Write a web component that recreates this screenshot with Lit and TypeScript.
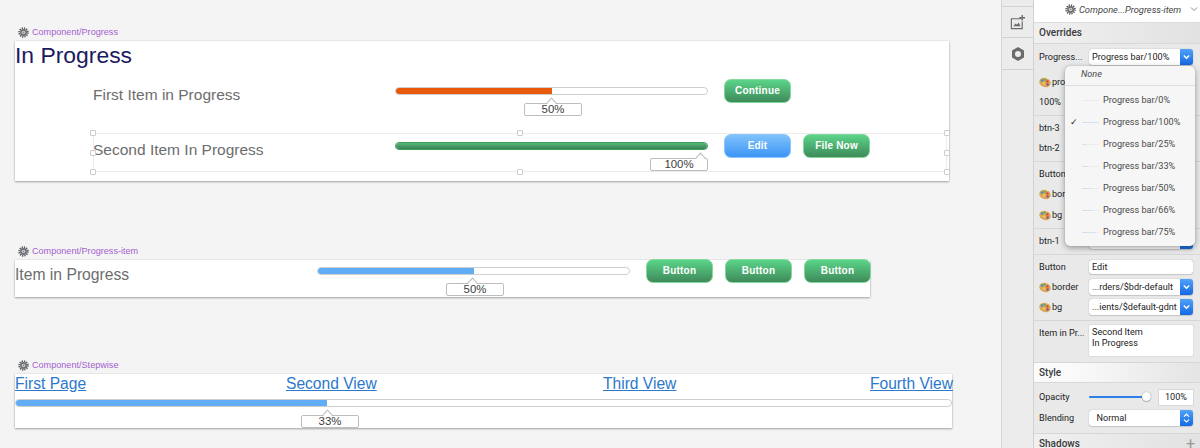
import { LitElement, html, css } from "lit";
import { customElement } from "lit/decorators.js";

const gear = html`<svg class="gear" viewBox="0 0 12 12" width="11" height="11">
  <circle cx="6" cy="6" r="4.6" fill="none" stroke="#55585c" stroke-width="2.2" stroke-dasharray="1.3 1.1"/>
  <circle cx="6" cy="6" r="3.7" fill="#6b6e73"/>
  <circle cx="6" cy="6" r="2" fill="#d8d9da"/>
  <circle cx="6" cy="6" r="1" fill="#85888c"/>
</svg>`;

const palette = html`<svg class="pal" viewBox="0 0 12 11" width="12" height="11">
  <ellipse cx="6" cy="5.5" rx="5.8" ry="4.6" fill="#dba654" transform="rotate(20 6 5.5)"/>
  <circle cx="3" cy="3.5" r="1.2" fill="#3f8fd8"/>
  <circle cx="5.6" cy="2.8" r="1.1" fill="#4fae55"/>
  <circle cx="8.4" cy="4.4" r="1.2" fill="#d8443c"/>
  <circle cx="8.6" cy="7.4" r="1.2" fill="#8a45b0"/>
  <circle cx="5" cy="6.6" r="1.2" fill="#e8d24c"/>
</svg>`;

const chevDown = html`<svg viewBox="0 0 13 16" width="13" height="16"><path d="M3.8 6.6 6.5 9.3 9.2 6.6" fill="none" stroke="#fff" stroke-width="1.4"/></svg>`;
const updown = html`<svg viewBox="0 0 13 16" width="13" height="16"><path d="M4 6.6 6.5 4.2 9 6.6M4 9.6 6.5 12 9 9.6" fill="none" stroke="#fff" stroke-width="1.2"/></svg>`;

@customElement("progress-bar")
class ProgressBar extends LitElement {
  static properties = {
    pct: { type: Number },
    tone: {},
    label: {},
    tipStart: { type: Number },
    caret: { type: Number },
  };
  pct = 0;
  tone = "blue";
  label = "";
  tipStart = 0;
  caret = 0;
  static styles = css`
    :host { display: block; position: relative; height: 8px; }
    .track { height: 8px; box-sizing: border-box; background: #fff; border: 1px solid #cfcfcf; border-radius: 4px; overflow: hidden; }
    .track.full { border-color: #3f9a60; }
    .fill { height: 8px; margin: -1px 0 0 -1px; border-radius: 4px 0 0 4px; }
    .fill.full { border-radius: 4px; }
    .orange { background: #e8590c; }
    .blue { background: #60adf6; }
    .green { background: linear-gradient(#5ac27f, #32794d); }
    .tip { position: absolute; top: 16px; width: 58px; height: 13px; box-sizing: border-box; background: #fff; border: 1px solid #bdbdbd; border-radius: 2px;
      font: 11.4px/11px "Liberation Sans", sans-serif; color: #3d3d3d; text-align: center; }
    .caret { position: absolute; top: -5px; width: 7px; height: 7px; margin-left: -4px; background: #fff; border-left: 1px solid #bdbdbd; border-top: 1px solid #bdbdbd; transform: rotate(45deg); box-sizing: border-box; }
    .txt { position: relative; }
  `;
  render() {
    const full = this.pct >= 100 ? "full" : "";
    return html`<div class="track ${full}"><div class="fill ${this.tone} ${full}" style="width:calc(${this.pct}% + 1px)"></div></div>
      <div class="tip" style="left:${this.tipStart}px"><div class="caret" style="left:${this.caret}px"></div><span class="txt">${this.label}</span></div>`;
  }
}

@customElement("app-root")
class AppRoot extends LitElement {
  static styles = css`
    :host { display: block; width: 1200px; height: 448px; overflow: hidden; }
    .root { display: flex; width: 1200px; height: 448px; background: #f4f4f4; font-family: "Liberation Sans", Arial, sans-serif; overflow: hidden; }
    .canvas { position: relative; width: 1001px; flex: none; }
    .label { position: absolute; display: flex; align-items: center; gap: 3px; left: 18px; color: #a45fd0; font-size: 9.1px; line-height: 11px; height: 11px; white-space: nowrap; }
    .gear { flex: none; }
    .board { position: absolute; left: 15px; background: #fff; box-shadow: 0 1px 2px rgba(0,0,0,.32), 0 0 1px rgba(0,0,0,.18); }

    .title { margin: 0; color: #1c1a5e; font-size: 22.9px; line-height: 28px; font-weight: 400; }
    .row { display: flex; position: relative; height: 24px; padding-left: 78px; }
    .row .name { width: 302px; color: #6d6d6d; font-size: 15.5px; line-height: 31px; flex: none; white-space: nowrap; }
    .row .barcol { width: 313px; flex: none; padding-top: 8px; margin-right: 16px; box-sizing: content-box; }
    .row .btns { display: flex; gap: 12px; }
    .first { margin-top: 10px; }
    .second { margin-top: 31px; }
    .item { padding-left: 0; margin-top: -1px; }
    .item .name { width: 302px; font-size: 15.7px; line-height: 32px; }
    .item .btns { gap: 12px; margin-left: 0; }

    .btn { box-sizing: border-box; width: 67px; height: 24px; border-radius: 7px; border: 1px solid #86d79c; background: linear-gradient(#5bd488, #3e8a5a);
      color: #fff; font: bold 10px/22px "Liberation Sans", sans-serif; text-align: center; letter-spacing: .2px; }
    .btn.blue { border-color: #8ac6fa; background: linear-gradient(#7fc2fb, #3c95f6); }

    .links { display: grid; grid-template-columns: 271px 317px 267px 82px; font-size: 15.6px; line-height: 20px; white-space: nowrap; }
    .links a { color: #2b78cc; text-decoration: underline; }
    .stepbar { margin-top: 5px; width: 937px; }

    .sel-line { position: absolute; left: 93px; width: 854px; height: 39px; top: 133px; box-sizing: border-box; border: 1px solid #ececec; pointer-events: none; }
    .handle { position: absolute; width: 6px; height: 6px; box-sizing: border-box; margin: -3px 0 0 -3px; background: #fff; border: 1px solid #cdcdcd; border-radius: 1px; }

    .strip { width: 32px; flex: none; box-sizing: border-box; border-left: 1px solid #d6d6d6; background: #ececec; display: flex; flex-direction: column; }
    .tool { height: 31px; box-sizing: border-box; border-bottom: 1px solid #d2d2d2; display: flex; align-items: center; justify-content: center; }
    .tool.top { height: 7px; flex: none; }
    .tool.tb { height: 31px; }
    .tool.hx { height: 32px; }

    .insp { position: relative; flex: 1; background: #e9e9e9; border-left: 1px solid #d2d2d2; box-sizing: border-box; font: 9.1px Roboto, "Liberation Sans", sans-serif; color: #222; }
    .head { height: 23px; background: #fff; border-bottom: 1px solid #dcdcdc; box-sizing: border-box; display: flex; align-items: center; padding: 0 0 4px 31px; gap: 3px; font-style: italic; font-size: 9.3px; color: #444; white-space: nowrap; }
    .chev { margin-left: 6px; }
    .band { height: 20px; box-sizing: border-box; padding-left: 5px; font-weight: 500; font-size: 10px; line-height: 20px; color: #3a3a3a; background: linear-gradient(90deg, #f0f0f0, #e2e2e2); border-bottom: 1px solid #d8d8d8; display: flex; justify-content: space-between; }
    .band.over { height: 21px; }
    .band.white { background: linear-gradient(90deg, #fbfbfb 20%, #e4e4e4); }
    .band .plus { margin-right: 5px; color: #9a9a9a; font-size: 16px; font-weight: 400; line-height: 20px; }
    .sec { border-bottom: 1px solid #d6d6d6; padding: 2px 6px 3px 5px; box-sizing: border-box; }
    .sec.s1 { padding-top: 3px; }
    .sec.style { padding-top: 4px; padding-bottom: 5px; }
    .irow { display: flex; align-items: center; height: 20px; white-space: nowrap; }
    .irow.mt5 { margin-top: 5px; }
    .irow.mt1 { margin-top: 1px; }
    .lab { width: 50px; flex: none; display: flex; align-items: center; gap: 1px; overflow: hidden; }
    .pal { flex: none; }
    .widget { box-sizing: border-box; width: 104px; height: 16px; background: #fff; border-radius: 3px; box-shadow: 0 0 1px rgba(0,0,0,.4), 0 1px 1px rgba(0,0,0,.12); display: flex; align-items: center; padding-left: 3px; overflow: hidden; }
    .widget .val { flex: 1; overflow: hidden; }
    .widget .go { width: 13px; height: 16px; flex: none; background: linear-gradient(#4fa3f9, #1668e2); }
    .input { height: 14px; }
    .area-wrap { display: flex; height: 34px; padding-top: 2px; }
    .area { box-sizing: border-box; width: 104px; height: 31px; background: #fff; box-shadow: 0 0 1px rgba(0,0,0,.45); padding: 2px 3px; line-height: 11px; border-radius: 1px; }
    .area-lab { width: 50px; flex: none; padding-top: 3px; white-space: nowrap; }
    .slider { position: relative; width: 58px; height: 2px; background: #2f7fe8; border-radius: 1px; flex: none; margin-right: 12px; }
    .thumb { position: absolute; right: -4px; top: -4px; width: 9px; height: 9px; border-radius: 50%; background: #fff; box-shadow: 0 0 1px rgba(0,0,0,.5), 0 1px 1px rgba(0,0,0,.2); }
    .pctbox { box-sizing: border-box; width: 34px; height: 15px; background: #fff; box-shadow: 0 0 1px rgba(0,0,0,.45); text-align: center; line-height: 15px; }

    .menu { position: absolute; left: 31px; top: 66px; width: 130px; height: 180px; background: #f6f6f6; border-radius: 5px; box-shadow: 0 2px 6px rgba(0,0,0,.35), 0 0 1px rgba(0,0,0,.3); color: #4a4a4a; font-size: 9.1px; }
    .none { height: 19px; border-bottom: 1px solid #dedede; font-style: italic; padding-left: 16px; line-height: 17px; box-sizing: content-box; }
    .mitem { display: flex; align-items: center; height: 22px; position: relative; white-space: nowrap; }
    .mlist { padding-top: 3px; }
    .check { width: 17px; flex: none; text-align: center; font-size: 9px; color: #222; }
    .mthumb { width: 17px; height: 1px; background: #ececec; flex: none; margin-right: 4px; position: relative; }
    .mthumb i { position: absolute; left: 0; top: 0; height: 1px; background: #d2e1f0; display: block; }
  `;

  rowsMenu = [
    ["Progress bar/0%", 0],
    ["Progress bar/100%", 100],
    ["Progress bar/25%", 25],
    ["Progress bar/33%", 33],
    ["Progress bar/50%", 50],
    ["Progress bar/66%", 66],
    ["Progress bar/75%", 75],
  ] as [string, number][];

  select(val: string, icon = chevDown) {
    return html`<div class="widget"><span class="val">${val}</span><span class="go">${icon}</span></div>`;
  }
  plain(val: string) {
    return html`<div class="widget input"><span class="val">${val}</span></div>`;
  }

  render() {
    const handles: [number, number][] = [
      [93, 133], [520, 133], [947, 133],
      [93, 153], [947, 153],
      [93, 172], [520, 172], [947, 172],
    ];
    return html`<div class="root">
      <div class="canvas">
        <div class="label" style="top:27px">${gear}<span>Component/Progress</span></div>
        <div class="board" style="top:41px;width:934px;height:140px">
          <h1 class="title">In Progress</h1>
          <div class="row first">
            <div class="name">First Item in Progress</div>
            <div class="barcol"><progress-bar pct="50" tone="orange" label="50%" tipStart="129" caret="27"></progress-bar></div>
            <div class="btns"><div class="btn">Continue</div></div>
          </div>
          <div class="row second">
            <div class="name">Second Item In Progress</div>
            <div class="barcol"><progress-bar pct="100" tone="green" label="100%" tipStart="255" caret="50"></progress-bar></div>
            <div class="btns"><div class="btn blue">Edit</div><div class="btn">File Now</div></div>
          </div>
        </div>
        <div class="sel-line"></div>
        ${handles.map(([x, y]) => html`<div class="handle" style="left:${x}px;top:${y}px"></div>`)}

        <div class="label" style="top:246px">${gear}<span>Component/Progress-item</span></div>
        <div class="board" style="top:260px;width:855px;height:37px">
          <div class="row item">
            <div class="name">Item in Progress</div>
            <div class="barcol"><progress-bar pct="50" tone="blue" label="50%" tipStart="129" caret="26"></progress-bar></div>
            <div class="btns"><div class="btn">Button</div><div class="btn">Button</div><div class="btn">Button</div></div>
          </div>
        </div>

        <div class="label" style="top:360px">${gear}<span>Component/Stepwise</span></div>
        <div class="board" style="top:374px;width:937px;height:54px">
          <div class="links"><a>First Page</a><a>Second View</a><a>Third View</a><a>Fourth View</a></div>
          <div class="stepbar"><progress-bar pct="33.3" tone="blue" label="33%" tipStart="286" caret="26"></progress-bar></div>
        </div>
      </div>

      <div class="strip">
        <div class="tool top"></div>
        <div class="tool tb"><svg viewBox="0 0 18 18" width="17" height="17"><path d="M13 5H2.5v10.5H14V8" fill="none" stroke="#6a6a6a" stroke-width="1.2"/><path d="M4.5 13 7 10l1.5 1.5L10.2 9l2 4z" fill="#6a6a6a"/><path d="M14 1v6M11 4h6" stroke="#6a6a6a" stroke-width="1.4"/></svg></div>
        <div class="tool hx"><svg viewBox="0 0 16 16" width="16" height="16"><path fill-rule="evenodd" d="M8 1l6 3.4v7.2L8 15l-6-3.4V4.4zM8 5a3 3 0 1 0 0 6 3 3 0 0 0 0-6z" fill="#6b6b6b"/></svg></div>
      </div>

      <div class="insp">
        <div class="head">${gear}<span>Compone...Progress-item</span><svg class="chev" viewBox="0 0 8 6" width="8" height="6"><path d="M1 1.5 4 4.5 7 1.5" fill="none" stroke="#888" stroke-width="1"/></svg></div>
        <div class="band over">Overrides</div>
        <div class="sec s1">
          <div class="irow"><div class="lab">Progress...</div>${this.select("Progress bar/100%")}</div>
          <div class="irow mt5"><div class="lab">${palette}<span>progress</span></div>${this.select("")}</div>
          <div class="irow"><div class="lab">100%</div>${this.plain("")}</div>
        </div>
        <div class="sec">
          <div class="irow"><div class="lab">btn-3</div>${this.select("")}</div>
          <div class="irow"><div class="lab">btn-2</div>${this.select("")}</div>
        </div>
        <div class="sec">
          <div class="irow"><div class="lab">Button</div>${this.plain("")}</div>
          <div class="irow"><div class="lab">${palette}<span>border</span></div>${this.select("")}</div>
          <div class="irow mt1"><div class="lab">${palette}<span>bg</span></div>${this.select("")}</div>
        </div>
        <div class="sec">
          <div class="irow"><div class="lab">btn-1</div>${this.select("")}</div>
        </div>
        <div class="sec">
          <div class="irow"><div class="lab">Button</div>${this.plain("Edit")}</div>
          <div class="irow"><div class="lab">${palette}<span>border</span></div>${this.select("...rders/$bdr-default")}</div>
          <div class="irow"><div class="lab">${palette}<span>bg</span></div>${this.select("...ients/$default-gdnt")}</div>
        </div>
        <div class="sec">
          <div class="area-wrap"><div class="area-lab">Item in Pr...</div><div class="area">Second Item<br />In Progress</div></div>
        </div>
        <div class="band white">Style</div>
        <div class="sec style">
          <div class="irow"><div class="lab">Opacity</div><div class="slider"><div class="thumb"></div></div><div class="pctbox">100%</div></div>
          <div class="irow mt1"><div class="lab">Blending</div>${this.select("\u00a0\u00a0Normal", updown)}</div>
        </div>
        <div class="band">Shadows<span class="plus">+</span></div>

        <div class="menu">
          <div class="none">None</div>
          <div class="mlist">
            ${this.rowsMenu.map(([t, p]) => html`<div class="mitem"><span class="check">${p === 100 ? "\u2713" : ""}</span><span class="mthumb"><i style="width:${p}%"></i></span><span>${t}</span></div>`)}
          </div>
        </div>
      </div>
    </div>`;
  }
}
